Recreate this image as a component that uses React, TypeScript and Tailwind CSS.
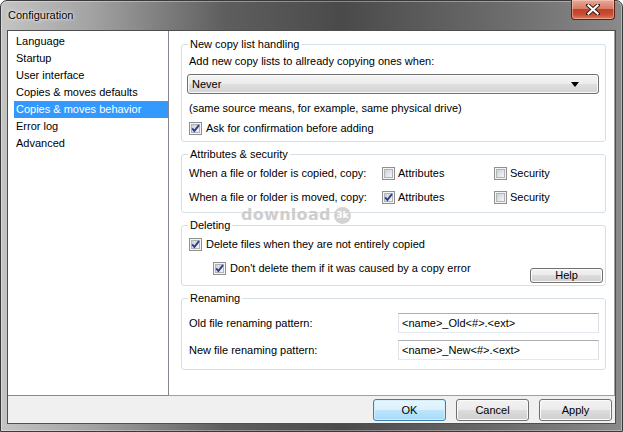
import React from "react";

function Check({ checked = false }: { checked?: boolean }) {
  return (
    <span className="relative flex h-[13px] w-[13px] shrink-0 items-center justify-center border border-[#8e8f8f] bg-[#f4f4f4]">
      <span className="h-[9px] w-[9px] border border-[#b1b3b6] bg-[linear-gradient(135deg,#cdd0d5_0%,#e6e7e9_60%,#f7f7f7_100%)]" />
      {checked && (
        <svg className="absolute left-0 top-0" width="11" height="11" viewBox="0 0 11 11">
          <path d="M2.2 5.4 L4.4 8 L8.9 2.2" fill="none" stroke="#2c3c8e" strokeWidth="1.9" />
        </svg>
      )}
    </span>
  );
}

function Btn({
  children,
  primary = false,
  className = "",
}: {
  children: React.ReactNode;
  primary?: boolean;
  className?: string;
}) {
  const look = primary
    ? "border-[#3c7fb1] bg-[linear-gradient(to_bottom,#eaf6fd_0%,#d9f0fc_50%,#bee6fd_50%,#a7d9f5_100%)] shadow-[inset_0_0_0_1px_#d4edfa]"
    : "border-[#707070] bg-[linear-gradient(to_bottom,#f2f2f2_0%,#ebebeb_50%,#dddddd_50%,#cfcfcf_100%)] shadow-[inset_0_0_0_1px_#fbfbfb]";
  return (
    <div
      className={`flex items-center justify-center rounded-[3px] border text-[11px] leading-none text-black ${look} ${className}`}
    >
      {children}
    </div>
  );
}

function Group({
  title,
  className,
  children,
}: {
  title: string;
  className: string;
  children: React.ReactNode;
}) {
  return (
    <fieldset className={`rounded-[3px] border border-[#d5dfe5] px-[7px] pt-[4px] ${className}`}>
      <legend className="-ml-px px-[2px] text-[11px] leading-[13px] text-black">{title}</legend>
      {children}
    </fieldset>
  );
}

const items = [
  "Language",
  "Startup",
  "User interface",
  "Copies & moves defaults",
  "Copies & moves behavior",
  "Error log",
  "Advanced",
];

export default function App() {
  return (
    <div className="relative h-[432px] w-[623px] overflow-hidden font-['Liberation_Sans',Arial,sans-serif]">
      <div className="flex h-full w-full flex-col rounded-t-[7px] border border-[#3a3a3a] bg-[linear-gradient(to_right,#c4c4c4_0%,#a4a4a4_14%,#5e5e5e_36%,#4a4a4a_55%,#686868_78%,#8a8a8a_100%)] px-[6px] pb-[7px] shadow-[inset_0_0_0_1px_rgba(255,255,255,0.35)]">
        {/* title bar */}
        <div className="flex h-[29px] shrink-0 items-start justify-between">
          <div className="pl-[1px] pt-[8px] text-[11px] leading-[13px] text-black [text-shadow:0_0_5px_rgba(255,255,255,0.9),0_0_2px_rgba(255,255,255,0.9)]">
            Configuration
          </div>
          <div className="-mt-px mr-[1px] flex h-[20px] w-[44px] items-center justify-center rounded-b-[4px] border border-t-0 border-[#5b2117] bg-[linear-gradient(to_bottom,#e9a898_0%,#d97c66_45%,#c2412a_50%,#c94b33_75%,#e07a5c_100%)] shadow-[inset_0_0_0_1px_rgba(255,220,210,0.45)]">
            <svg width="14" height="11" viewBox="0 0 14 11">
              <path d="M2 1 L12 10 M12 1 L2 10" stroke="#3b1a14" strokeWidth="4" strokeLinecap="square" />
              <path d="M2.5 1.5 L11.5 9.5 M11.5 1.5 L2.5 9.5" stroke="#ffffff" strokeWidth="2.2" strokeLinecap="square" />
            </svg>
          </div>
        </div>

        {/* client */}
        <div className="flex flex-1 flex-col border border-[#4e4e4e] bg-[#f0f0f0]">
          <div className="flex flex-1">
            {/* list */}
            <div className="w-[161px] shrink-0 border border-t-0 border-l-0 border-[#828790] bg-white pt-[2px]">
              {items.map((it) => {
                const sel = it === "Copies & moves behavior";
                return (
                  <div
                    key={it}
                    className={`ml-[6px] h-[17px] pl-[2px] text-[11px] leading-[17px] ${
                      sel ? "bg-[#3399ff] text-white" : "text-black"
                    }`}
                  >
                    {it}
                  </div>
                );
              })}
            </div>

            {/* panel */}
            <div className="flex flex-1 flex-col gap-[6px] border-b border-r border-[#a0a0a0] bg-white pl-[12px] pr-[8px] pt-[7px]">
              <Group title="New copy list handling" className="h-[104px]">
                <div className="flex flex-col">
                  <div className="text-[11px] leading-[13px] text-black">
                    Add new copy lists to allready copying ones when:
                  </div>
                  <div className="-ml-[2px] -mr-[1px] mt-[6px] flex h-[20px] items-center justify-between rounded-[3px] border border-[#707070] bg-[linear-gradient(to_bottom,#f4f4f4_0%,#ececec_50%,#dfdfdf_50%,#d3d3d3_100%)] pl-[4px] pr-[19px] shadow-[inset_0_0_0_1px_#fafafa]">
                    <span className="text-[11px] leading-none text-black">Never</span>
                    <svg width="8" height="5" viewBox="0 0 8 5">
                      <path d="M0 0 H8 L4 5 Z" fill="#000" />
                    </svg>
                  </div>
                  <div className="mt-[8px] text-[11px] leading-[13px] text-black">
                    (same source means, for example, same physical drive)
                  </div>
                  <div className="mt-[7px] flex h-[13px] items-center gap-[4px]">
                    <Check checked />
                    <span className="text-[11px] leading-[13px] text-black">
                      Ask for confirmation before adding
                    </span>
                  </div>
                </div>
              </Group>

              <Group title="Attributes & security" className="h-[65px]">
                <div className="flex flex-col gap-[8px]">
                  {[
                    ["When a file or folder is copied, copy:", false],
                    ["When a file or folder is moved, copy:", true],
                  ].map(([label, attr]) => (
                    <div key={label as string} className="flex h-[16px] items-center text-[11px] text-black">
                      <span className="w-[193px] shrink-0">{label as string}</span>
                      <span className="flex w-[112px] shrink-0 items-center gap-[3px]">
                        <Check checked={attr as boolean} />
                        <span>Attributes</span>
                      </span>
                      <span className="flex items-center gap-[3px]">
                        <Check />
                        <span>Security</span>
                      </span>
                    </div>
                  ))}
                </div>
              </Group>

              <Group title="Deleting" className="h-[67px]">
                <div className="flex flex-col">
                  <div className="flex h-[16px] items-center gap-[4px] text-[11px] text-black">
                    <Check checked />
                    <span>Delete files when they are not entirely copied</span>
                  </div>
                  <div className="mt-[8px] flex items-start">
                    <div className="flex h-[16px] items-center gap-[4px] pl-[24px] text-[11px] text-black">
                      <Check checked />
                      <span>Don&apos;t delete them if it was caused by a copy error</span>
                    </div>
                    <Btn className="-mr-[5px] ml-auto mt-[8px] h-[15px] w-[73px]">Help</Btn>
                  </div>
                </div>
              </Group>

              <Group title="Renaming" className="h-[78px]">
                <div className="flex flex-col gap-[7px] pt-[4px]">
                  {[
                    ["Old file renaming pattern:", "<name>_Old<#>.<ext>"],
                    ["New file renaming pattern:", "<name>_New<#>.<ext>"],
                  ].map(([label, val]) => (
                    <div key={label} className="flex items-center text-[11px] text-black">
                      <span className="w-[209px] shrink-0">{label}</span>
                      <div className="-mr-[1px] flex h-[20px] flex-1 items-center border border-[#abadb3] border-b-[#e3e9ef] border-l-[#e2e3ea] border-r-[#dbdfe6] bg-white pl-[3px]">
                        {val}
                      </div>
                    </div>
                  ))}
                </div>
              </Group>
            </div>
          </div>

          {/* bottom bar */}
          <div className="flex h-[27px] shrink-0 items-start justify-end gap-[10px] pr-[3px] pt-[3px]">
            <Btn primary className="h-[22px] w-[73px]">OK</Btn>
            <Btn className="h-[22px] w-[73px]">Cancel</Btn>
            <Btn className="h-[22px] w-[73px]">Apply</Btn>
          </div>
        </div>
      </div>

      {/* watermark */}
      <div className="pointer-events-none absolute left-[241px] top-[206px] flex items-center gap-[3px] opacity-90">
        <span className="font-['DejaVu_Sans',sans-serif] text-[16px] font-bold leading-[18px] tracking-[0.3px] text-[#c9c9c9] [text-shadow:0_0_2px_#ffffff]">
          download
        </span>
        <span className="flex h-[17px] w-[17px] items-center justify-center rounded-full bg-[#cfcfcf] font-['DejaVu_Sans',sans-serif] text-[9px] font-bold leading-none text-white">
          3k
        </span>
      </div>
    </div>
  );
}
